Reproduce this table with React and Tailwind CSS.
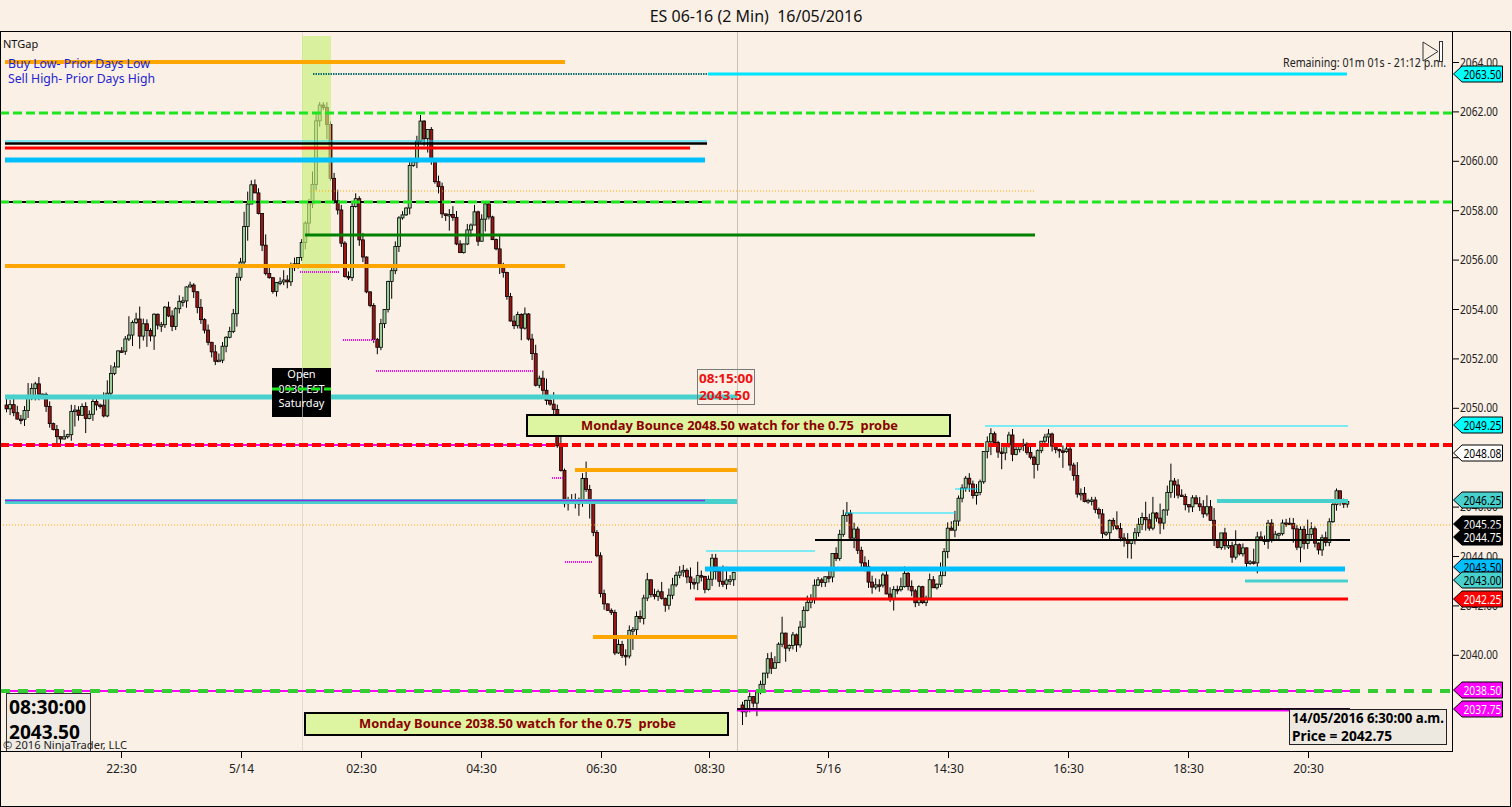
import React from 'react';

function mulberry32(a) {
  return function () {
    a |= 0; a = (a + 0x6d2b79f5) | 0;
    let t = Math.imul(a ^ (a >>> 15), 1 | a);
    t = (t + Math.imul(t ^ (t >>> 7), 61 | t)) ^ t;
    return ((t ^ (t >>> 14)) >>> 0) / 4294967296;
  };
}

const WP1 = [[5,405],[30,410],[45,430],[60,440],[75,385],[90,410],[110,380],[125,340],[140,320],[160,300],[185,290],[200,330],[215,362],[230,320],[245,220],[252,185],[260,262],[275,300],[290,250],[300,230],[310,175],[316,90],[322,110],[330,200],[340,240],[346,305],[352,205],[360,262],[375,355],[385,300],[395,240],[405,190],[415,160],[420,105],[430,160],[440,200],[460,250],[470,230],[485,210],[495,280],[505,310],[520,310],[535,370],[545,410],[555,450],[565,530],[575,490],[585,480],[595,565],[605,620],[615,650],[625,650],[635,610],[650,580],[665,600],[680,570],[695,590],[705,570],[720,575],[735,585]];
const WP2 = [[741,705],[760,690],[780,650],[800,620],[815,580],[830,550],[845,520],[860,560],[880,580],[890,600],[905,585],[920,590],[940,570],[950,530],[960,500],[975,490],[985,438],[1000,445],[1020,455],[1040,460],[1065,470],[1080,490],[1095,520],[1110,530],[1125,560],[1140,525],[1160,510],[1170,485],[1185,490],[1200,510],[1215,530],[1235,550],[1248,570],[1260,530],[1280,520],[1300,545],[1320,545],[1335,510],[1345,515],[1350,522]];

function interp(wp, x) {
  if (x <= wp[0][0]) return wp[0][1];
  for (let i = 1; i < wp.length; i++) {
    if (x <= wp[i][0]) {
      const [x0, y0] = wp[i - 1];
      const [x1, y1] = wp[i];
      return y0 + ((y1 - y0) * (x - x0)) / (x1 - x0);
    }
  }
  return wp[wp.length - 1][1];
}

function gen() {
  const rnd = mulberry32(24680);
  const out = [];
  const run = (wp, x0, x1, amp, walk) => {
    let prev = interp(wp, x0);
    let dev = 0;
    for (let x = x0; x <= x1; x += 3.6) {
      const t = interp(wp, x);
      dev = dev * 0.75 + (rnd() - 0.5) * walk;
      const o = prev;
      const c = t + dev + (rnd() - 0.5) * amp;
      const top = Math.min(o, c), bot = Math.max(o, c);
      const hi = top - rnd() * 7 - (rnd() < 0.18 ? rnd() * 14 : 0);
      const lo = bot + rnd() * 7 + (rnd() < 0.18 ? rnd() * 14 : 0);
      out.push({ x, o, c, hi, lo });
      prev = c;
    }
  };
  run(WP1, 5, 735, 22, 26);
  run(WP2, 741, 1349, 16, 20);
  return out;
}
const CANDLES = gen();

const LINES = [
  { x1: 5, x2: 565, y: 62, c: '#ffa500', w: 4 },
  { x1: 313, x2: 708, y: 74, c: '#0e7070', w: 2, d: '1.5 1' },
  { x1: 708, x2: 1347, y: 74, c: '#00e5ff', w: 3 },
  { x1: 0, x2: 1452, y: 113, c: '#1ee61e', w: 3, d: '9 4' },
  { x1: 5, x2: 707, y: 141, c: '#00d8ff', w: 1 },
  { x1: 5, x2: 707, y: 143.5, c: '#000', w: 2.5 },
  { x1: 5, x2: 690, y: 148, c: '#ff0000', w: 3 },
  { x1: 5, x2: 705, y: 160, c: '#00bfff', w: 5 },
  { x1: 310, x2: 1035, y: 191, c: '#ffa500', w: 1, d: '1 2' },
  { x1: 5, x2: 708, y: 202, c: '#000', w: 2 },
  { x1: 0, x2: 1452, y: 202, c: '#1ee61e', w: 3, d: '9 4' },
  { x1: 305, x2: 1035, y: 235, c: '#008000', w: 3 },
  { x1: 5, x2: 565, y: 266, c: '#ffa500', w: 4 },
  { x1: 300, x2: 340, y: 272, c: '#ff00ff', w: 2, d: '1 1' },
  { x1: 343, x2: 376, y: 340, c: '#ff00ff', w: 2, d: '1 1' },
  { x1: 376, x2: 533, y: 371, c: '#ff00ff', w: 2, d: '1 1' },
  { x1: 533, x2: 550, y: 425, c: '#ff00ff', w: 2, d: '1 1' },
  { x1: 552, x2: 563, y: 478, c: '#ff00ff', w: 2, d: '1 1' },
  { x1: 565, x2: 593, y: 562, c: '#ff00ff', w: 2, d: '1 1' },
  { x1: 593, x2: 613, y: 637, c: '#ff00ff', w: 2, d: '1 1' },
  { x1: 5, x2: 737, y: 397, c: '#48d1cc', w: 5 },
  { x1: 0, x2: 550, y: 445, c: '#ff00ff', w: 2 },
  { x1: 0, x2: 1452, y: 445, c: '#ff0000', w: 4, d: '9 4' },
  { x1: 985, x2: 1348, y: 426, c: '#00e5ff', w: 1 },
  { x1: 955, x2: 978, y: 489, c: '#00e5ff', w: 1 },
  { x1: 845, x2: 955, y: 513, c: '#00e5ff', w: 1 },
  { x1: 706, x2: 815, y: 551, c: '#00e5ff', w: 1 },
  { x1: 575, x2: 737, y: 470, c: '#ffa500', w: 4 },
  { x1: 5, x2: 737, y: 501.5, c: '#48d1cc', w: 5 },
  { x1: 5, x2: 705, y: 500.5, c: '#8a2be2', w: 1.5 },
  { x1: 1217, x2: 1348, y: 501, c: '#48d1cc', w: 4 },
  { x1: 0, x2: 1452, y: 525, c: '#ffa500', w: 1, d: '1 2' },
  { x1: 815, x2: 1350, y: 540, c: '#000', w: 2 },
  { x1: 705, x2: 1345, y: 569, c: '#00bfff', w: 5 },
  { x1: 1245, x2: 1348, y: 581, c: '#48d1cc', w: 3 },
  { x1: 695, x2: 1348, y: 599, c: '#ff0000', w: 3 },
  { x1: 593, x2: 737, y: 637, c: '#ffa500', w: 4 },
  { x1: 0, x2: 1350, y: 691, c: '#ff00ff', w: 2 },
  { x1: 0, x2: 1452, y: 691, c: '#33cc33', w: 4, d: '10 8' },
  { x1: 737, x2: 1350, y: 710, c: '#ff00ff', w: 3 },
  { x1: 737, x2: 1350, y: 709, c: '#200020', w: 2 },
];

const TICKS = [2064, 2062, 2060, 2058, 2056, 2054, 2052, 2050, 2046, 2044, 2042, 2040];
const Y = (p) => 62.5 + (2064 - p) * 24.7;

const TAGS = [
  { y: 74, t: '2063.50', f: '#00ffff', tc: '#000' },
  { y: 425, t: '2049.25', f: '#00ffff', tc: '#000' },
  { y: 453, t: '2048.08', f: '#ffffff', tc: '#000' },
  { y: 500, t: '2046.25', f: '#48d1cc', tc: '#000' },
  { y: 524, t: '2045.25', f: '#000000', tc: '#fff' },
  { y: 537, t: '2044.75', f: '#000000', tc: '#fff' },
  { y: 567, t: '2043.50', f: '#00bfff', tc: '#000' },
  { y: 580, t: '2043.00', f: '#48d1cc', tc: '#000' },
  { y: 599, t: '2042.25', f: '#ff0000', tc: '#fff' },
  { y: 690, t: '2038.50', f: '#ff00ff', tc: '#fff' },
  { y: 709, t: '2037.75', f: '#ff00ff', tc: '#fff' },
];

const TIMES = [[121, '22:30'], [241, '5/14'], [361, '02:30'], [481, '04:30'], [601, '06:30'], [709, '08:30'], [828, '5/16'], [948, '14:30'], [1068, '16:30'], [1188, '18:30'], [1308, '20:30']];

function Line({ l }) {
  return (
    <line x1={l.x1} x2={l.x2} y1={l.y} y2={l.y} stroke={l.c} strokeWidth={l.w} strokeDasharray={l.d} />
  );
}

function Plot() {
  return (
    <svg width="1451" height="719" className="block">
      <g transform="translate(-1,-32)">
        <line x1="737.5" x2="737.5" y1="32" y2="751" stroke="#c9c2ba" strokeWidth="1" />
        <line x1="302.5" x2="302.5" y1="32" y2="751" stroke="#e2dad2" strokeWidth="1" />
        {CANDLES.map((k, i) => {
          const up = k.c < k.o;
          const top = Math.min(k.o, k.c);
          const h = Math.max(1.5, Math.abs(k.o - k.c));
          return (
            <g key={i}>
              <line x1={k.x + 1.5} x2={k.x + 1.5} y1={k.hi} y2={k.lo} stroke="#000" strokeWidth="1" />
              <rect x={k.x} y={top} width="3" height={h} fill={up ? '#9ccf98' : '#9b1515'} stroke="#000" strokeWidth="0.8" />
            </g>
          );
        })}
        <rect x="302" y="36" width="29" height="332" fill="#c8f07a" opacity="0.65" />
        {LINES.map((l, i) => <Line key={i} l={l} />)}

        <rect x="272" y="368" width="59" height="49" fill="#000" />
        <line x1="302.5" x2="302.5" y1="368" y2="417" stroke="#8a8a8a" strokeWidth="1" />
        <g fill="#fff" fontSize="11" textAnchor="middle">
          <text x="301.5" y="378">Open</text>
          <text x="301.5" y="393">0930 EST</text>
          <text x="301.5" y="407">Saturday</text>
        </g>
        <line x1="272" x2="331" y1="389" y2="389" stroke="#1ee61e" strokeWidth="3" strokeDasharray="9 4" />

        <rect x="697.5" y="369.5" width="57" height="35" fill="none" stroke="#7a7a7a" strokeWidth="1" />
        <g fill="#ee1111" fontSize="13" fontWeight="bold">
          <text x="699" y="383" textLength="54" lengthAdjust="spacingAndGlyphs">08:15:00</text>
          <text x="699" y="400" textLength="51" lengthAdjust="spacingAndGlyphs">2043.50</text>
        </g>

        <rect x="527" y="415" width="423" height="21" fill="#ddf5a0" stroke="#000" strokeWidth="2" />
        <text x="581" y="426" dominantBaseline="middle" fill="#8b0000" fontSize="13" fontWeight="bold" xmlSpace="preserve" textLength="317" lengthAdjust="spacingAndGlyphs">Monday Bounce 2048.50 watch for the 0.75  probe</text>

        <rect x="305" y="713" width="423" height="22" fill="#ddf5a0" stroke="#000" strokeWidth="2" />
        <text x="359" y="724" dominantBaseline="middle" fill="#8b0000" fontSize="13" fontWeight="bold" xmlSpace="preserve" textLength="317" lengthAdjust="spacingAndGlyphs">Monday Bounce 2038.50 watch for the 0.75  probe</text>

        <rect x="6.5" y="693.5" width="84" height="60" fill="#efebe4" stroke="#333" strokeWidth="1" />
        <g fill="#000" fontSize="19" fontWeight="bold">
          <text x="9" y="714" textLength="77" lengthAdjust="spacingAndGlyphs">08:30:00</text>
          <text x="9" y="739" textLength="71" lengthAdjust="spacingAndGlyphs">2043.50</text>
        </g>
        <text x="3" y="749" fill="#222" fontSize="11.5" textLength="124" lengthAdjust="spacingAndGlyphs">© 2016 NinjaTrader, LLC</text>

        <rect x="1289.5" y="709.5" width="157" height="35" fill="#ede8e0" stroke="#222" strokeWidth="1" />
        <g fill="#000" fontSize="14" fontWeight="bold">
          <text x="1292" y="723" textLength="152" lengthAdjust="spacingAndGlyphs">14/05/2016 6:30:00 a.m.</text>
          <text x="1292" y="741" textLength="100" lengthAdjust="spacingAndGlyphs">Price = 2042.75</text>
        </g>

        <text x="3" y="48" fill="#111" fontSize="11">NTGap</text>
        <g fill="#2323d0" fontSize="13">
          <text x="8" y="68" textLength="142" lengthAdjust="spacingAndGlyphs">Buy Low- Prior Days Low</text>
          <text x="8" y="83" textLength="147" lengthAdjust="spacingAndGlyphs">Sell High- Prior Days High</text>
        </g>
        <text x="1283" y="67" fill="#222" fontSize="12" textLength="163" lengthAdjust="spacingAndGlyphs">Remaining: 01m 01s - 21:12 p.m.</text>
        <polygon points="1423,42 1438,51.5 1423,61" fill="none" stroke="#333" strokeWidth="1" />
        <rect x="1439.5" y="41.5" width="3" height="20" fill="#fff" stroke="#333" strokeWidth="1" />
      </g>
    </svg>
  );
}

function PriceAxis() {
  return (
    <svg width="57" height="720" className="block">
      <g transform="translate(-1453,-32)">
        {TICKS.map((p) => (
          <g key={p}>
            <line x1="1453" x2="1459" y1={Y(p)} y2={Y(p)} stroke="#000" strokeWidth="1" />
            <text x="1460" y={Y(p) + 4} fill="#222" fontSize="12" textLength="38" lengthAdjust="spacingAndGlyphs">{p.toFixed(2)}</text>
          </g>
        ))}
        <line x1="1453" x2="1459" y1={Y(2048)} y2={Y(2048)} stroke="#000" strokeWidth="1" />
        {TAGS.map((t) => (
          <g key={t.t}>
            <polygon
              points={`1453.5,${t.y} 1462,${t.y - 8} 1502.5,${t.y - 8} 1502.5,${t.y + 8} 1462,${t.y + 8}`}
              fill={t.f}
              stroke="#000"
              strokeWidth="1"
            />
            <text x="1463.5" y={t.y + 4.5} fill={t.tc} fontSize="12.5" textLength="38" lengthAdjust="spacingAndGlyphs">{t.t}</text>
          </g>
        ))}
      </g>
    </svg>
  );
}

function TimeAxis() {
  return (
    <svg width="1509" height="54" className="block">
      <g transform="translate(-1,-752)">
        {TIMES.map(([x, t]) => (
          <g key={t}>
            <line x1={x + 0.5} x2={x + 0.5} y1="752" y2="758" stroke="#000" strokeWidth="1" />
            <text x={x + 0.5} y="773" textAnchor="middle" fill="#222" fontSize="12">{t}</text>
          </g>
        ))}
      </g>
    </svg>
  );
}

export default function App() {
  return (
    <div className="w-[1512px] h-[807px] bg-[#faf0e6] flex flex-col overflow-hidden font-['Noto_Sans',sans-serif]">
      <div className="h-[31px] flex items-center justify-center text-[16px] text-[#111] whitespace-pre">
        ES 06-16 (2 Min)  16/05/2016
      </div>
      <div className="flex-1 border border-black flex flex-col mr-[1px]">
        <div className="flex h-[720px]">
          <div className="w-[1452px] border-r border-b border-black overflow-hidden">
            <Plot />
          </div>
          <div className="flex-1 overflow-hidden">
            <PriceAxis />
          </div>
        </div>
        <div className="flex-1 overflow-hidden">
          <TimeAxis />
        </div>
      </div>
    </div>
  );
}
